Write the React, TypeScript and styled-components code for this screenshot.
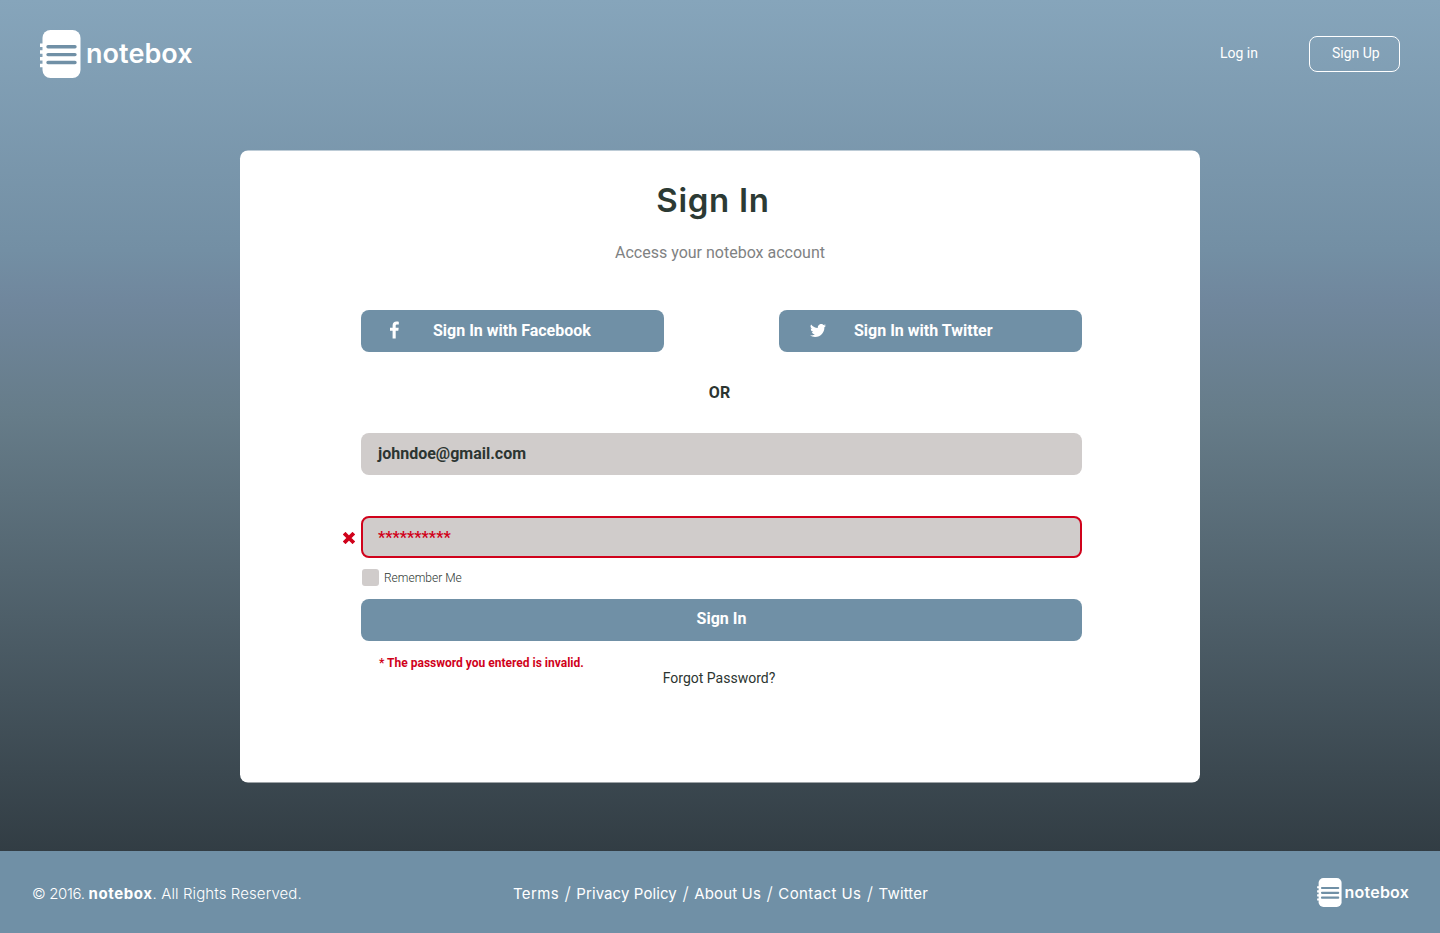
import React from "react";
import styled, { createGlobalStyle } from "styled-components";

const GlobalStyle = createGlobalStyle`
  *, *::before, *::after { box-sizing: border-box; }
  body { margin: 0; font-family: Roboto, sans-serif; color: #2c3531; -webkit-font-smoothing: antialiased; }
`;

const slate = "#7090a6";
const danger = "#d0021b";
const display = `Inter, "Open Sans", sans-serif`;

const Page = styled.div`
  width: 1440px;
  height: 933px;
  display: flex;
  flex-direction: column;
  overflow: hidden;
  background: linear-gradient(180deg, #86a5bb 0, #738fa4 250px, #70879d 300px, #667c89 415px, #323d44 851px);
`;

const Header = styled.header`
  height: 150px;
  padding: 30px 40px 0;
  display: flex;
  justify-content: space-between;
  align-items: flex-start;
`;

const Brand = styled.div<{ $small?: boolean }>`
  display: flex;
  align-items: flex-start;
  gap: ${(p) => (p.$small ? 2.5 : 5)}px;
  color: #fff;
  font-family: ${display};
  font-weight: 600;
  font-size: ${(p) => (p.$small ? 16 : 27)}px;
  line-height: ${(p) => (p.$small ? 29 : 48)}px;
  letter-spacing: ${(p) => (p.$small ? "0.2px" : "0.05px")};
  white-space: nowrap;
  svg { display: block; }
`;

const Nav = styled.nav`
  display: flex;
  align-items: center;
  gap: 51px;
  margin-top: 6px;
  color: #fff;
  font-size: 14px;
`;

const LogIn = styled.a`
  line-height: 34px;
  padding-bottom: 2px;
`;

const SignUp = styled.a`
  width: 91px;
  height: 36px;
  padding-left: 22px;
  border: 1px solid #fff;
  border-radius: 8px;
  line-height: 32px;
`;

const Card = styled.main`
  position: relative;
  isolation: isolate;
  width: 960px;
  height: 632px;
  margin: 0 auto;
  padding: 27px 118px 0 121px;
  display: flex;
  flex-direction: column;

  &::before {
    content: "";
    position: absolute;
    inset: 0;
    z-index: -1;
    border-radius: 8px;
    background: #fff;
    transform: translateY(0.5px);
  }
`;

const Title = styled.h1`
  margin: 0;
  padding-right: 17px;
  text-align: center;
  font: 600 33px/46px ${display};
  letter-spacing: 0.7px;
  color: #2c3a34;
`;

const Subtitle = styled.p`
  margin: 20px 3px 0 0;
  text-align: center;
  font-size: 16px;
  line-height: 20px;
  color: #7f8283;
`;

const SocialRow = styled.div`
  display: flex;
  justify-content: space-between;
  margin-top: 47px;
`;

const Social = styled.button<{ $icon: number; $gap: number }>`
  width: 303px;
  height: 42px;
  padding: 0 0 0 ${(p) => p.$icon}px;
  display: flex;
  align-items: center;
  gap: ${(p) => p.$gap}px;
  border: 0;
  border-radius: 8px;
  background: ${slate};
  color: #fff;
  font: 700 16px/42px Roboto, sans-serif;
  svg { display: block; margin-top: -2px; }
`;

const Or = styled.div`
  margin: 31px 4px 0 0;
  text-align: center;
  font-size: 16px;
  font-weight: 700;
  line-height: 20px;
`;

const Field = styled.div<{ $error?: boolean }>`
  position: relative;
  height: 42px;
  margin-top: ${(p) => (p.$error ? 41 : 30)}px;
  padding-left: ${(p) => (p.$error ? 15 : 17)}px;
  border: ${(p) => (p.$error ? `2px solid ${danger}` : "0")};
  border-radius: 8px;
  background: #d0cccb;
  color: ${(p) => (p.$error ? danger : "#2c3531")};
  font-size: 16px;
  font-weight: 700;
  line-height: ${(p) => (p.$error ? 39 : 41)}px;
`;

const ErrorMark = styled.svg`
  position: absolute;
  left: -20px;
  top: 14px;
`;

const Remember = styled.label`
  display: flex;
  align-items: center;
  gap: 5px;
  height: 17px;
  margin: 11px 0 13px 1px;
  font-size: 12px;
  font-weight: 300;
`;

const Box = styled.span`
  width: 17px;
  height: 17px;
  border-radius: 3px;
  background: #d0cccb;
`;

const Submit = styled.button`
  height: 42px;
  padding: 0 0 2px;
  border: 0;
  border-radius: 8px;
  background: ${slate};
  color: #fff;
  font: 700 16px/40px Roboto, sans-serif;
`;

const ErrorText = styled.p`
  margin: 15px 0 0 18px;
  font-size: 12px;
  font-weight: 700;
  line-height: 14px;
  color: ${danger};
`;

const Forgot = styled.a`
  align-self: center;
  margin-right: 5px;
  font-size: 14px;
  line-height: 16px;
`;

const Footer = styled.footer`
  height: 82px;
  margin-top: auto;
  padding: 0 31px 0 32px;
  display: grid;
  grid-template-columns: 481px 1fr auto;
  align-items: center;
  background: ${slate};
  color: #fff;
  font: 400 15px/24px ${display};
  white-space: nowrap;
`;

const Copyright = styled.div`
  padding-top: 3px;
  font-weight: 300;
  letter-spacing: 0.1px;
  b { font-weight: 700; letter-spacing: 0.6px; }
`;

const Year = styled.span`
  letter-spacing: -0.35px;
`;

const Links = styled.div`
  padding-top: 3px;
  display: flex;
  gap: 5.5px;
`;

const FooterLink = styled.a<{ $track: number }>`
  letter-spacing: ${(p) => p.$track}px;
`;

const Slash = styled.span`
  font-size: 18px;
  font-weight: 300;
`;

const Notebook = ({ width, height }: { width: number; height: number }) => (
  <svg width={width} height={height} viewBox="0 0 41 48" fill="#fff">
    <rect x="2.5" width="38" height="48" rx="8" />
    <path d="M0 13.5h4v3.500H0zM0 20.300h4v3.500H0zM0 27h4v3.500H0zM0 33.800h4v3.500H0z" />
    <path d="M8 16.700h27M8 24.600h27M8 32.500h27" stroke={slate} strokeWidth="3.4" strokeLinecap="round" />
  </svg>
);

const FacebookIcon = () => (
  <svg width="10" height="18" viewBox="0 0 10 18" fill="#fff">
    <path d="M8.800.700v2.700H7.200C6 3.400 5.700 4 5.700 4.800v1.900h3l-.4 3H5.700v7.800H2.600V9.700H0v-3h2.600V4.500C2.600 1.900 4.200.5 6.500.5c1.100 0 2 .1 2.300.2z" />
  </svg>
);

const TwitterIcon = () => (
  <svg width="16" height="13" viewBox="0 0 24 19.500" fill="#fff">
    <path d="M23.950 2.300a10 10 0 0 1-2.820.780 4.960 4.960 0 0 0 2.160-2.730 10 10 0 0 1-3.130 1.190 4.920 4.920 0 0 0-8.380 4.480A13.930 13.930 0 0 1 1.640.9a4.920 4.920 0 0 0 1.520 6.570 4.900 4.900 0 0 1-2.230-.610v.060a4.920 4.920 0 0 0 3.950 4.830 5 5 0 0 1-2.210.080 4.940 4.940 0 0 0 4.600 3.420A9.870 9.870 0 0 1 0 17.290a14 14 0 0 0 7.550 2.210c9.060 0 14.010-7.500 14.010-13.980 0-.210 0-.420-.02-.630a9.940 9.940 0 0 0 2.460-2.550z" />
  </svg>
);

const footerLinks = [
  { label: "Terms", track: 0.35 },
  { label: "Privacy Policy", track: 0.1 },
  { label: "About Us", track: 0.15 },
  { label: "Contact Us", track: 0.4 },
  { label: "Twitter", track: 0.15 },
];

export default function App() {
  return (
    <Page>
      <GlobalStyle />
      <Header>
        <Brand><Notebook width={41} height={48} />notebox</Brand>
        <Nav>
          <LogIn>Log in</LogIn>
          <SignUp>Sign Up</SignUp>
        </Nav>
      </Header>
      <Card>
        <Title>Sign In</Title>
        <Subtitle>Access your notebox account</Subtitle>
        <SocialRow>
          <Social $icon={29} $gap={33}><FacebookIcon />Sign In with Facebook</Social>
          <Social $icon={31} $gap={28}><TwitterIcon />Sign In with Twitter</Social>
        </SocialRow>
        <Or>OR</Or>
        <Field>johndoe@gmail.com</Field>
        <Field $error>
          <ErrorMark width="12" height="12" viewBox="0 0 12 12">
            <path d="M2.500 2.500l7 7M9.500 2.500l-7 7" stroke={danger} strokeWidth="3.800" strokeLinecap="square" strokeLinejoin="round" />
          </ErrorMark>
          **********
        </Field>
        <Remember><Box />Remember Me</Remember>
        <Submit>Sign In</Submit>
        <ErrorText>* The password you entered is invalid.</ErrorText>
        <Forgot>Forgot Password?</Forgot>
      </Card>
      <Footer>
        <Copyright><Year>© 2016. </Year><b>notebox</b>. All Rights Reserved.</Copyright>
        <Links>
          {footerLinks.map(({ label, track }, i) => (
            <React.Fragment key={label}>
              {i > 0 && <Slash>/</Slash>}
              <FooterLink $track={track}>{label}</FooterLink>
            </React.Fragment>
          ))}
        </Links>
        <Brand $small><Notebook width={25} height={29} />notebox</Brand>
      </Footer>
    </Page>
  );
}
